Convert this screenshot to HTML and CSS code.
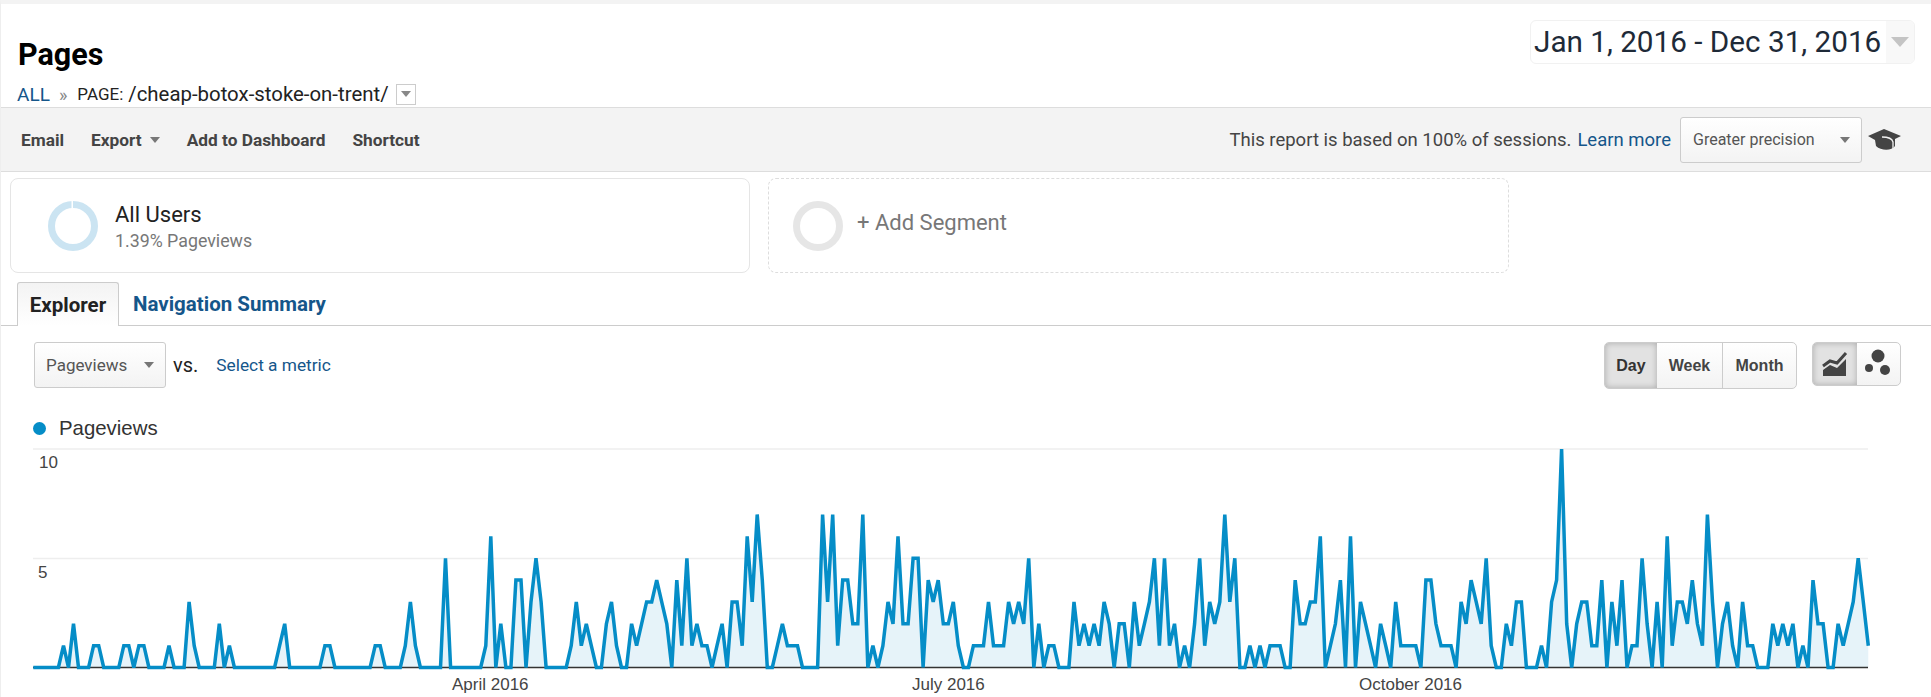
FILE: index.html
```html
<!DOCTYPE html>
<html>
<head lang="en">
    <meta charset="UTF-8">
    <title>Pages</title>
    <link rel="stylesheet" href="styles.css">
    <script>
        document.addEventListener('DOMContentLoaded',function(){
            var aData=[
                0,0,0,0,0,0,1,0,2,0, 0,0,1,1,0,0,0,0,1,1, 0,1,1,0,0,0,0,1,0,0, 0,3,1,0,0,0,0,2,0,1,
                0,0,0,0,0,0,0,0,0,1, 2,0,0,0,0,0,0,0,1,1, 0,0,0,0,0,0,0,0,1,1, 0,0,0,0,1,3,1,0,0,0,
                0,0,5,0,0,0,0,0,0,0, 1,6,0,2,0,0,4,4,0,3, 5,3,0,0,0,0,0,1,3,1, 2,1,0,0,2,3,1,0,0,2,
                1,2,3,3,4,3,2,0,4,1, 5,1,2,1,1,0,1,2,0,3, 3,1,6,3,7,4,0,0,1,2, 1,1,1,0,0,0,0,7,3,7,
                1,4,4,2,2,7,0,1,0,1, 3,2,6,2,2,5,5,0,4,3, 4,2,2,3,1,0,0,1,1,1, 3,1,1,1,3,2,3,2,5,0,
                2,0,1,1,0,0,0,3,1,2, 1,2,1,3,2,0,2,2,0,3, 1,2,3,5,1,5,1,2,0,1, 0,2,5,1,3,2,3,7,3,5,
                0,0,1,0,1,0,1,1,1,0, 0,4,2,2,3,3,6,0,1,2, 4,0,6,0,3,2,1,0,2,1, 0,3,1,1,1,1,0,4,4,2,
                1,1,1,0,3,2,4,3,2,5, 1,0,0,2,1,3,3,0,0,0, 1,0,3,4,10,2,0,2,3,3, 1,1,4,0,3,1,4,0,1,1,
                5,2,0,3,0,6,1,3,3,2, 4,2,1,7,3,0,2,3,1,0, 3,1,1,0,0,0,2,1,2,1, 2,0,1,0,4,2,2,0,0,2,
                1,2,3,5,3,1
            ];
            var left=33.3;
            var step=1835/365;
            var base=227.5;
            var unit=21.85;
            var aPts=[];
            for(var i=0;i<aData.length;i++){
                aPts.push((left+i*step).toFixed(1)+','+(base-aData[i]*unit).toFixed(1));
            }
            var sPts=aPts.join(' ');
            document.querySelector('.chart-line').setAttribute('points',sPts);
            document.querySelector('.chart-area').setAttribute('points',left+','+base+' '+sPts+' 1868.3,'+base);
        },false);
    </script>
</head>
<body>
    <div class="wrap">
        <header class="head">
            <div class="head-title">
                <h1>Pages</h1>
                <div class="crumbs">
                    <a href="#">ALL</a>
                    <span class="crumbs-sep">»</span>
                    <span class="crumbs-key">PAGE:</span>
                    <span class="crumbs-val">/cheap-botox-stoke-on-trent/</span>
                    <span class="crumbs-drop"><i class="arrow"></i></span>
                </div>
            </div>
            <div class="date">
                <span class="date-text">Jan 1, 2016 - Dec 31, 2016</span>
                <span class="date-drop"><i class="arrow arrow-big"></i></span>
            </div>
        </header>

        <div class="toolbar">
            <div class="toolbar-left">
                <span>Email</span>
                <span>Export<i class="arrow arrow-tool"></i></span>
                <span>Add to Dashboard</span>
                <span>Shortcut</span>
            </div>
            <div class="toolbar-right">
                <span class="note">This report is based on 100% of sessions.</span>
                <a class="note-link" href="#">Learn more</a>
                <span class="select select-precision">Greater precision<i class="arrow arrow-dark"></i></span>
                <svg class="cap" width="33" height="22" viewBox="0 0 33 22">
                    <path fill="#444" d="M16 0L33 7L27 10V17C24 22 13 22 8 17L7 11L0 7Z"/>
                    <path fill="none" stroke="#f3f3f3" stroke-width="1.300" d="M14 8C19 8 24 9 25 13V21"/>
                </svg>
            </div>
        </div>

        <div class="segments">
            <div class="seg">
                <svg class="ring" width="50" height="50" viewBox="0 0 50 50">
                    <circle cx="25" cy="25" r="21.500" fill="none" stroke="#cbe4f2" stroke-width="7"/>
                    <rect class="ring-gap" x="23.500" y="0" width="1.500" height="8"/>
                </svg>
                <div>
                    <div class="seg-name">All Users</div>
                    <div class="seg-sub">1.39% Pageviews</div>
                </div>
            </div>
            <div class="seg seg-add">
                <svg class="ring" width="50" height="50" viewBox="0 0 50 50">
                    <circle cx="25" cy="25" r="21.500" fill="none" stroke="#e6e6e6" stroke-width="7"/>
                </svg>
                <div class="seg-plus">+ Add Segment</div>
            </div>
        </div>

        <div class="tabs">
            <span class="tab tab-on">Explorer</span>
            <a class="tab" href="#">Navigation Summary</a>
        </div>

        <div class="metrics">
            <div class="metrics-left">
                <span class="select select-metric">Pageviews<i class="arrow arrow-dark"></i></span>
                <span class="vs">vs.</span>
                <a class="metric-link" href="#">Select a metric</a>
            </div>
            <div class="metrics-right">
                <div class="btns">
                    <span class="btn btn-day btn-on">Day</span>
                    <span class="btn btn-week">Week</span>
                    <span class="btn btn-month">Month</span>
                </div>
                <div class="btns btns-type">
                    <span class="btn btn-type btn-on">
                        <svg width="26" height="26" viewBox="0 0 26 26">
                            <path fill="none" stroke="#444" stroke-width="3" d="M1 15L8 10L15 12L24 2"/>
                            <path fill="#444" d="M1 25V19L8 14L15 17L24 8V25Z"/>
                        </svg>
                    </span>
                    <span class="btn btn-type">
                        <svg width="30" height="30" viewBox="0 0 30 30">
                            <circle cx="15" cy="7" r="6.500" fill="#444"/>
                            <circle cx="6" cy="19" r="4" fill="#444"/>
                            <circle cx="22" cy="21" r="5" fill="#444"/>
                        </svg>
                    </span>
                </div>
            </div>
        </div>

        <div class="legend"><i class="legend-dot"></i>Pageviews</div>

        <svg class="chart" width="1931" height="257" viewBox="0 0 1931 257">
            <line class="grid" x1="33" y1="9" x2="1868" y2="9"/>
            <line class="grid" x1="33" y1="118.500" x2="1868" y2="118.500"/>
            <polygon class="chart-area"/>
            <line class="axis" x1="33" y1="227.500" x2="1868" y2="227.500"/>
            <polyline class="chart-line"/>
            <text x="39" y="28">10</text>
            <text x="38" y="138">5</text>
            <text x="452" y="250">April 2016</text>
            <text x="912" y="250">July 2016</text>
            <text x="1359" y="250">October 2016</text>
        </svg>
    </div>
</body>
</html>
```
FILE: styles.css
```css
* {
    margin: 0;
    padding: 0;
    list-style: none;
    box-sizing: border-box;
}
html,body{
    height:100%;
    overflow:hidden;
    background:#fff;
}
body{
    font-family: Roboto, "Liberation Sans", sans-serif;
    color:#222;
}
a{
    text-decoration:none;
    color:#15568a;
}
.wrap{
    height:100%;
    border-top:4px solid #f3f3f3;
    border-left:1px solid #eee;
}

.arrow{
    display:inline-block;
    border-left:5px solid transparent;
    border-right:5px solid transparent;
    border-top:6px solid #888;
}
.arrow-big{
    border-left-width:9px;
    border-right-width:9px;
    border-top:10px solid #c4c4c4;
}
.arrow-tool{
    margin-left:8px;
    vertical-align:3px;
    border-top-color:#777;
}
.arrow-dark{
    border-top-color:#777;
}

.head{
    height:103px;
    display:flex;
    justify-content:space-between;
}
.head-title{
    padding:34px 0 0 17px;
}
.head h1{
    font-size:30.500px;
    line-height:34px;
    font-weight:bold;
    color:#000;
}
.crumbs{
    display:flex;
    align-items:center;
    height:24px;
    margin:10px 0 0 -1px;
    font-size:19px;
    color:#222;
}
.crumbs-sep{
    margin:0 10px 0 9px;
    font-size:18px;
    color:#888;
}
.crumbs-key{
    font-size:17px;
    margin-right:5px;
}
.crumbs-val{
    font-size:20.400px;
}
.crumbs-drop{
    width:20px;
    height:21px;
    margin-left:7px;
    border:1px solid #ccc;
    display:flex;
    align-items:center;
    justify-content:center;
}
.date{
    display:flex;
    width:385px;
    height:44px;
    margin:16px 16px 0 0;
    border:1px solid #f1f1f1;
    border-radius:6px;
    overflow:hidden;
}
.date-text{
    flex:1;
    padding-left:3px;
    font-size:29.700px;
    line-height:42px;
    color:#1e2a38;
}
.date-drop{
    width:28px;
    background:#f8f8f8;
    display:flex;
    align-items:center;
    justify-content:center;
}

.toolbar{
    height:65px;
    display:flex;
    align-items:center;
    justify-content:space-between;
    padding:0 30px 0 20px;
    background:#f3f3f3;
    border-top:1px solid #ddd;
    border-bottom:1px solid #ddd;
}
.toolbar-left{
    display:flex;
    gap:27px;
    font-size:17.300px;
    font-weight:bold;
    color:#444;
}
.toolbar-right{
    display:flex;
    align-items:center;
    font-size:18.500px;
    color:#444;
}
.note-link{
    margin-left:6px;
}
.select{
    display:flex;
    align-items:center;
    justify-content:space-between;
    height:46px;
    border:1px solid #ccc;
    border-radius:3px;
    background:linear-gradient(#fff,#f3f3f3);
    font-size:16px;
    color:#555;
}
.select-precision{
    width:182px;
    margin-left:9px;
    padding:0 11px 0 12px;
}
.cap{
    margin-left:6px;
}

.segments{
    display:flex;
    gap:18px;
    margin:6px 0 0 9px;
}
.seg{
    display:flex;
    align-items:center;
    width:740px;
    height:95px;
    padding-left:37px;
    border:1px solid #e5e5e5;
    border-radius:8px;
}
.seg-add{
    width:741px;
    padding-left:24px;
    border:1px dashed #ddd;
}
.ring{
    flex:none;
    margin-right:17px;
}
.ring-gap{
    fill:#fff;
}
.seg-add .ring{
    margin-right:14px;
}
.seg-name{
    margin-top:4px;
    font-size:22px;
    line-height:26px;
    color:#222;
}
.seg-sub{
    margin-top:1px;
    font-size:17.800px;
    line-height:24px;
    color:#777;
}
.seg-plus{
    margin-top:-6px;
    font-size:22px;
    color:#777;
}

.tabs{
    display:flex;
    height:44px;
    margin-top:9px;
    padding-left:16px;
    border-bottom:1px solid #ccc;
}
.tab{
    font-size:20.500px;
    font-weight:bold;
    line-height:44px;
    height:44px;
    margin-left:14px;
}
.tab-on{
    width:102px;
    margin-left:0;
    text-align:center;
    color:#222;
    border:1px solid #ccc;
    border-bottom:none;
    border-radius:3px 3px 0 0;
    background:linear-gradient(#f3f3f3,#fff);
}

.metrics{
    display:flex;
    justify-content:space-between;
    align-items:flex-start;
    margin-top:16px;
    padding:0 30px 0 33px;
}
.metrics-left{
    display:flex;
    align-items:center;
}
.select-metric{
    width:132px;
    padding:0 11px 0 11px;
    font-size:17px;
}
.vs{
    margin-left:7px;
    font-size:20px;
    color:#222;
}
.metric-link{
    margin-left:18px;
    font-size:17.300px;
}
.metrics-right{
    display:flex;
    align-items:flex-start;
    gap:15px;
}
.btns{
    display:flex;
    height:47px;
    border:1px solid #ccc;
    border-radius:5px;
    overflow:hidden;
    background:linear-gradient(#fff,#f3f3f3);
}
.btns-type{
    height:44px;
}
.btn{
    display:flex;
    align-items:center;
    justify-content:center;
    font-family:"Liberation Sans", sans-serif;
    font-size:16px;
    font-weight:bold;
    color:#444;
}
.btn-day{
    width:52px;
}
.btn-week{
    width:66px;
    border-right:1px solid #ccc;
}
.btn-month{
    width:73px;
}
.btn-type{
    width:43.500px;
}
.btn-on{
    color:#333;
    background:#e2e2e2;
    box-shadow:inset 0 0 6px rgba(0,0,0,.25);
}

.legend{
    display:flex;
    align-items:center;
    height:24px;
    margin-top:27px;
    padding-left:32px;
    font-family:"Liberation Sans", sans-serif;
    font-size:20.400px;
    color:#333;
}
.legend-dot{
    width:13px;
    height:13px;
    margin-right:13px;
    border-radius:50%;
    background:#058dc7;
}

.chart{
    display:block;
    margin:0 0 0 -1px;
}
.chart text{
    font-family:"Liberation Sans", sans-serif;
    font-size:17px;
    fill:#444;
}
.grid{
    stroke:#eee;
    stroke-width:1.500;
}
.axis{
    stroke:#333;
    stroke-width:1.500;
}
.chart-area{
    fill:#058dc7;
    fill-opacity:.1;
}
.chart-line{
    fill:none;
    stroke:#058dc7;
    stroke-width:3.500;
    stroke-linejoin:miter;
}
```
